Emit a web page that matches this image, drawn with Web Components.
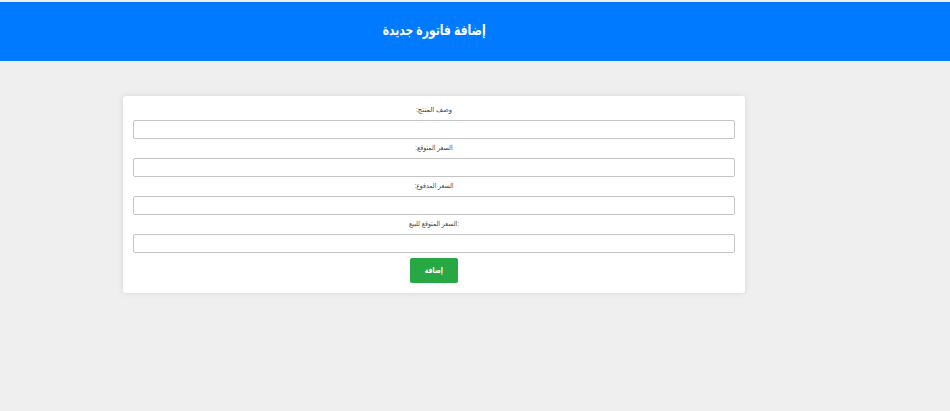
<!DOCTYPE html>
<html lang="ar">
<head>
<meta charset="utf-8">
<title>إضافة فاتورة جديدة</title>
<style>
body{margin:0;background:#efefef;font-family:"Liberation Sans","DejaVu Sans",sans-serif}
</style>
</head>
<body>
<invoice-page>
  <page-header slot="header">إضافة فاتورة جديدة</page-header>
  <invoice-form>
    <form-field dir="rtl" style="--stretch:.97">وصف المنتج:</form-field>
    <form-field dir="rtl">السعر المتوقع:</form-field>
    <form-field dir="rtl">السعر المدفوع:</form-field>
    <form-field dir="rtl">:السعر المتوقع للبيع</form-field>
    <submit-button slot="action" dir="rtl">إضافة</submit-button>
  </invoice-form>
</invoice-page>
<script>
const define = (name, html) => customElements.define(name, class extends HTMLElement {
  constructor() {
    super();
    this.attachShadow({mode: 'open'}).innerHTML = html;
  }
});
define('invoice-page', `<style>
:host{display:flex;flex-direction:column;height:411px;box-sizing:border-box;padding-top:2px;overflow:hidden}
main{padding:35px 205px 0 123px}
</style><slot name="header"></slot><main><slot></slot></main>`);
define('page-header', `<style>
:host{display:flex;justify-content:center;align-items:center;box-sizing:border-box;height:59px;padding:0 81px 3px 0;background:#007bff;color:#fff}
h1{margin:0;font-size:14.5px;line-height:20px;font-weight:700;white-space:nowrap;transform:scaleX(.745)}
</style><h1 dir="rtl"><slot></slot></h1>`);
define('invoice-form', `<style>
:host{display:block;box-sizing:border-box;height:197px;padding:5px 10px 0;background:#fff;border-radius:3px;box-shadow:0 0 6px rgba(0,0,0,.1)}
form{display:flex;flex-direction:column}
footer{display:flex;justify-content:center;padding-top:5px}
</style><form><slot></slot><footer><slot name="action"></slot></footer></form>`);
define('form-field', `<style>
:host{display:flex;flex-direction:column;height:38px}
label{box-sizing:border-box;height:19px;line-height:17px;text-align:center;font-size:7px;color:#444;white-space:nowrap;transform:scaleX(var(--stretch,.88))}
input{box-sizing:border-box;width:100%;height:19px;margin:0;padding:0 5px;border:1px solid #c5c5c5;border-radius:2px;background:#fff;outline:0}
</style><label><slot></slot></label><input type="text">`);
define('submit-button', `<style>
:host{display:block}
button{display:block;width:48px;height:25px;padding:0;border:0;border-radius:2px;background:#28a745;color:#fff;font:700 8px/25px "Liberation Sans","DejaVu Sans",sans-serif}
span{display:inline-block;transform:scaleX(.77)}
</style><button type="button"><span><slot></slot></span></button>`);
</script>
</body>
</html>
